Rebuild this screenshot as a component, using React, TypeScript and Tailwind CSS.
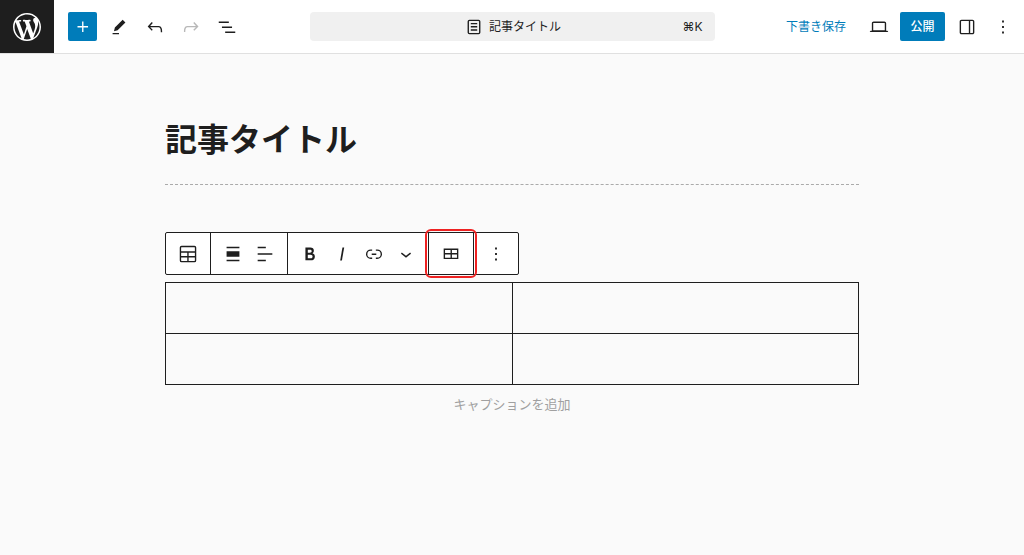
import type { ReactNode } from 'react';
import clsx from 'clsx';

const icons = {
  plus: 'M11 12.5V17.5H12.5V12.5H17.5V11H12.5V6H11V11H6V12.5H11Z',
  edit: 'm19 7-3-3-8.5 8.5-1 4 4-1L19 7Zm-7 11.5H5V20h7v-1.5Z',
  undo: 'M18.3 11.7c-.6-.6-1.4-.9-2.3-.9H6.7l2.9-3.3-1.1-1-4.5 5L8.5 16l1-1-2.7-2.7H16c.5 0 .9.2 1.3.5 1 1 1 3.4 1 4.5v.3h1.5v-.2c0-1.5 0-4.3-1.5-5.7z',
  redo: 'M15.6 6.5l-1.1 1 2.9 3.3H8c-.9 0-1.7.3-2.3.9-1.4 1.5-1.4 4.2-1.4 5.6v.2h1.5v-.3c0-1.1 0-3.5 1-4.5.3-.3.7-.5 1.3-.5h9.2L14.5 15l1.1 1.1 4.6-4.6-4.6-5z',
  listView: 'M3 6h11v1.5H3V6Zm3.5 5.5h11V13h-11v-1.5ZM21 17H10v1.5h11V17Z',
  post: 'M15.5 7.5h-7V9h7V7.5Zm-7 3.5h7v1.5h-7V11Zm7 3.5h-7V16h7v-1.5ZM17 4H7a2 2 0 0 0-2 2v12a2 2 0 0 0 2 2h10a2 2 0 0 0 2-2V6a2 2 0 0 0-2-2ZM7 5.5h10a.5.5 0 0 1 .5.5v12a.5.5 0 0 1-.5.5H7a.5.5 0 0 1-.5-.5V6a.5.5 0 0 1 .5-.5Z',
  desktop: 'M20.5 16h-.7V8c0-1.1-.9-2-2-2H6.2c-1.1 0-2 .9-2 2v8h-.7c-.8 0-1.5.7-1.5 1.5h20c0-.8-.7-1.5-1.5-1.5zM5.7 8c0-.3.2-.5.5-.5h11.6c.3 0 .5.2.5.5v7.6H5.7V8z',
  sidebar: 'M18 4H6c-1.1 0-2 .9-2 2v12c0 1.1.9 2 2 2h12c1.1 0 2-.9 2-2V6c0-1.1-.9-2-2-2zm-4 14.5H6c-.3 0-.5-.2-.5-.5V6c0-.3.2-.5.5-.5h8v13zm4.5-.5c0 .3-.2.5-.5.5h-2.5v-13H18c.3 0 .5.2.5.5v12z',
  more: 'M13 19h-2v-2h2v2zm0-6h-2v-2h2v2zm0-6h-2V5h2v2z',
  blockTable: 'M19 3H5a2 2 0 0 0-2 2v14a2 2 0 0 0 2 2h14a2 2 0 0 0 2-2V5a2 2 0 0 0-2-2ZM5 4.5h14a.5.5 0 0 1 .5.5v4h-15V5a.5.5 0 0 1 .5-.5Zm6.2 6v3.7H4.5v-3.7h6.7Zm1.5 0h6.8v3.7h-6.8v-3.7ZM4.5 15.7h6.7v3.8H5a.5.5 0 0 1-.5-.5v-3.3Zm8.2 3.8v-3.8h6.8V19a.5.5 0 0 1-.5.5h-6.3Z',
  alignNone: 'M5 15h14V9H5v6zm0 4.8h14v-1.5H5v1.5zM5 4.2v1.5h14V4.2H5z',
  alignLeft: 'M4 19.8h8.9v-1.5H4v1.5zm8.9-15.6H4v1.5h8.9V4.2zm-8.9 7v1.5h16v-1.5H4z',
  bold: 'M14.7 11.3c1-.6 1.5-1.6 1.5-3 0-2.3-1.3-3.4-4-3.4H7v14h5.8c1.4 0 2.5-.3 3.3-1 .8-.7 1.2-1.7 1.2-2.9.1-1.9-.8-3.1-2.6-3.7zm-5.1-4h2.3c.6 0 1.1.1 1.4.4.3.3.5.7.5 1.2s-.2 1-.5 1.2c-.3.3-.8.4-1.4.4H9.6V7.3zm4.6 9c-.4.3-1 .4-1.7.4H9.6v-3.9h2.9c.7 0 1.3.2 1.7.5.4.3.6.8.6 1.5s-.2 1.2-.6 1.5z',
  italic: 'M12.5 5L10 19h1.9l2.5-14z',
  link: 'M10 17.389H8.444A5.194 5.194 0 1 1 8.444 7H10v1.5H8.444a3.694 3.694 0 0 0 0 7.389H10v1.5ZM14 7h1.556a5.194 5.194 0 0 1 0 10.39H14v-1.5h1.556a3.694 3.694 0 0 0 0-7.39H14V7Zm-4.5 6h5v-1.5h-5V13Z',
  chevronDown: 'M17.5 11.6L12 16l-5.5-4.4.9-1.2L12 14l4.5-3.6 1 1.2z',
  table: 'M4 6v11.5h16V6H4zm1.5 1.5h6V11h-6V7.5zm0 8.5v-3.5h6V16h-6zm13 0H13v-3.5h5.5V16zM13 11V7.5h5.5V11H13z',
};

type IconName = keyof typeof icons;

function Icon({ name }: { name: IconName }) {
  return (
    <svg viewBox="0 0 24 24" className="size-[22px] shrink-0" fill="currentColor" aria-hidden="true">
      <path d={icons[name]} fillRule="evenodd" />
    </svg>
  );
}

function WordPressLogo() {
  return (
    <svg viewBox="0 0 20 20" className="size-7" fill="currentColor" aria-hidden="true">
      <path d="M20 10c0-5.51-4.49-10-10-10C4.48 0 0 4.49 0 10c0 5.52 4.48 10 10 10 5.51 0 10-4.48 10-10zM7.78 15.37L4.37 6.22c.55-.02 1.17-.08 1.17-.08.5-.06.44-1.13-.06-1.11 0 0-1.45.11-2.37.11-.18 0-.37 0-.58-.01C4.12 2.69 6.87 1.11 10 1.11c2.33 0 4.45.87 6.05 2.34-.68-.11-1.65.39-1.65 1.58 0 .74.45 1.36.9 2.1.35.61.55 1.36.55 2.46 0 1.49-1.4 5-1.4 5l-3.03-8.37c.54-.02.82-.17.82-.17.5-.05.44-1.25-.06-1.22 0 0-1.44.12-2.38.12-.87 0-2.33-.12-2.33-.12-.5-.03-.56 1.2-.06 1.22l.92.08 1.26 3.41zM17.41 10c.24-.64.74-1.87.43-4.25.7 1.29 1.05 2.71 1.05 4.25 0 3.29-1.73 6.24-4.4 7.78.97-2.59 1.94-5.2 2.92-7.78zM6.1 18.09C3.12 16.65 1.11 13.53 1.11 10c0-1.3.23-2.48.72-3.59C3.25 10.3 4.67 14.2 6.1 18.09zm4.03-6.63l2.58 6.98c-.86.29-1.76.45-2.71.45-.79 0-1.57-.11-2.29-.33.81-2.38 1.62-4.74 2.42-7.1z" />
    </svg>
  );
}

interface IconButtonProps {
  icon: IconName;
  label: string;
  primary?: boolean;
  disabled?: boolean;
}

function IconButton({ icon, label, primary, disabled }: IconButtonProps) {
  return (
    <button
      type="button"
      aria-label={label}
      disabled={disabled}
      className={clsx(
        'flex size-[29px] shrink-0 items-center justify-center rounded-xs',
        primary && 'bg-[#007cba] text-white',
        disabled && 'text-[#b8b8b8]'
      )}
    >
      <Icon name={icon} />
    </button>
  );
}

function ToolbarGroup({ children }: { children: ReactNode }) {
  return (
    <div className="relative flex items-center border-r border-[#1e1e1e] px-[6px] last:border-r-0">
      {children}
    </div>
  );
}

function ToolbarButton({ icon, label }: { icon: IconName; label: string }) {
  return (
    <button type="button" aria-label={label} className="flex h-[41px] w-8 items-center justify-center">
      <Icon name={icon} />
    </button>
  );
}

function EditorHeader() {
  return (
    <header className="grid grid-cols-[1fr_minmax(0,405px)_1fr] items-center border-b border-[#e0e0e0] bg-white">
      <div className="flex items-center">
        <a href="#" aria-label="投稿一覧" className="flex h-[53px] w-[54px] items-center justify-center bg-[#1e1e1e] text-white">
          <WordPressLogo />
        </a>
        <div className="ml-[14px] flex gap-[7px]">
          <IconButton icon="plus" label="ブロックを追加" primary />
          <IconButton icon="edit" label="ツール" />
          <IconButton icon="undo" label="元に戻す" />
          <IconButton icon="redo" label="やり直す" disabled />
          <IconButton icon="listView" label="リスト表示" />
        </div>
      </div>

      <button type="button" className="grid h-[29px] grid-cols-[1fr_auto_1fr] items-center rounded-sm bg-[#f0f0f0] px-3 text-xs">
        <span className="col-start-2 flex items-center gap-1">
          <Icon name="post" />
          記事タイトル
        </span>
        <kbd className="text-right font-[Inter,'DejaVu_Sans',sans-serif]">⌘K</kbd>
      </button>

      <div className="flex items-center justify-end gap-[7px] pr-[7px]">
        <button type="button" className="px-[11px] text-xs text-[#007cba]">下書き保存</button>
        <IconButton icon="desktop" label="表示" />
        <button type="button" className="h-[29px] w-[45px] rounded-xs bg-[#007cba] text-xs font-medium text-white">
          公開
        </button>
        <IconButton icon="sidebar" label="設定" />
        <IconButton icon="more" label="オプション" />
      </div>
    </header>
  );
}

function BlockToolbar() {
  return (
    <div role="toolbar" aria-label="ブロックツール" className="flex w-fit rounded-xs border border-[#1e1e1e] bg-white">
      <ToolbarGroup>
        <ToolbarButton icon="blockTable" label="テーブル" />
      </ToolbarGroup>
      <ToolbarGroup>
        <ToolbarButton icon="alignNone" label="配置" />
        <ToolbarButton icon="alignLeft" label="列の配置を変更" />
      </ToolbarGroup>
      <ToolbarGroup>
        <ToolbarButton icon="bold" label="太字" />
        <ToolbarButton icon="italic" label="イタリック" />
        <ToolbarButton icon="link" label="リンク" />
        <ToolbarButton icon="chevronDown" label="さらに表示" />
      </ToolbarGroup>
      <ToolbarGroup>
        <ToolbarButton icon="table" label="表を編集" />
        <span className="pointer-events-none absolute -inset-1 z-10 rounded-md border-2 border-[#ee2222]" />
      </ToolbarGroup>
      <ToolbarGroup>
        <ToolbarButton icon="more" label="オプション" />
      </ToolbarGroup>
    </div>
  );
}

const rows = [
  ['', ''],
  ['', ''],
];

export default function App() {
  return (
    <div className="min-h-screen bg-[#fafafa] font-['Liberation_Sans','Noto_Sans_CJK_JP',sans-serif] text-[#1e1e1e]">
      <EditorHeader />
      <main className="mx-auto max-w-[742px] px-6 pt-[62px]">
        <h1 className="border-b border-dashed border-[#aaaaaa] pb-5 text-[32px] leading-12 font-bold">
          記事タイトル
        </h1>
        <div className="mt-[47px]">
          <BlockToolbar />
        </div>
        <figure className="mt-[7px]">
          <table className="w-full table-fixed border-collapse" aria-label="テーブル">
            <tbody>
              {rows.map((cells, r) => (
                <tr key={r}>
                  {cells.map((cell, c) => (
                    <td key={c} className="h-[51px] border border-[#1e1e1e] p-2">{cell}</td>
                  ))}
                </tr>
              ))}
            </tbody>
          </table>
          <figcaption className="mt-[7px]">
            <input
              type="text"
              aria-label="キャプション"
              placeholder="キャプションを追加"
              className="w-full bg-transparent text-center text-[13px] leading-5 outline-none placeholder:text-[#a0a0a0]"
            />
          </figcaption>
        </figure>
      </main>
    </div>
  );
}
